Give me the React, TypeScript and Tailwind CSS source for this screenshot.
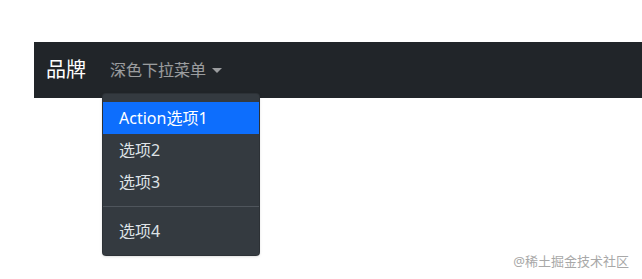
import React from 'react';

const items = [
    { label: 'Action选项1', active: true },
    { label: '选项2' },
    { label: '选项3' },
];

export default function App() {
    return (
        <div
            className="relative h-[279px] w-[642px] overflow-hidden bg-white pt-[42px] pl-[34px]"
            style={{ fontFamily: '"Noto Sans", "Noto Sans CJK SC", sans-serif' }}
        >
            <nav className="flex h-[56px] items-center bg-[#212529] px-3">
                <a className="mr-4 text-[20px] leading-[30px] text-white">品牌</a>
                <div className="relative">
                    <a className="flex items-center px-2 py-2 text-[16px] leading-6 text-white/55">
                        深色下拉菜单
                        <span className="ml-[6px] inline-block h-0 w-0 border-x-[5px] border-t-[5px] border-x-transparent border-t-white/55" />
                    </a>
                    <ul className="absolute top-[43px] left-0 z-10 w-[158px] rounded border border-black/15 bg-[#343a40] py-2 text-[16px] leading-6 shadow">
                        {items.map((item) => (
                            <li key={item.label}>
                                <a
                                    className={
                                        item.active
                                            ? 'block bg-[#0d6efd] px-4 py-1 text-white'
                                            : 'block px-4 py-1 text-[#dee2e6]'
                                    }
                                >
                                    {item.label}
                                </a>
                            </li>
                        ))}
                        <li>
                            <hr className="my-2 border-t border-[#4f555c]" />
                        </li>
                        <li>
                            <a className="block px-4 py-1 text-[#dee2e6]">选项4</a>
                        </li>
                    </ul>
                </div>
            </nav>
            <span className="absolute right-[13px] bottom-[10px] text-[13px] leading-4 text-[#a8a8a8]">
                @稀土掘金技术社区
            </span>
        </div>
    );
}
